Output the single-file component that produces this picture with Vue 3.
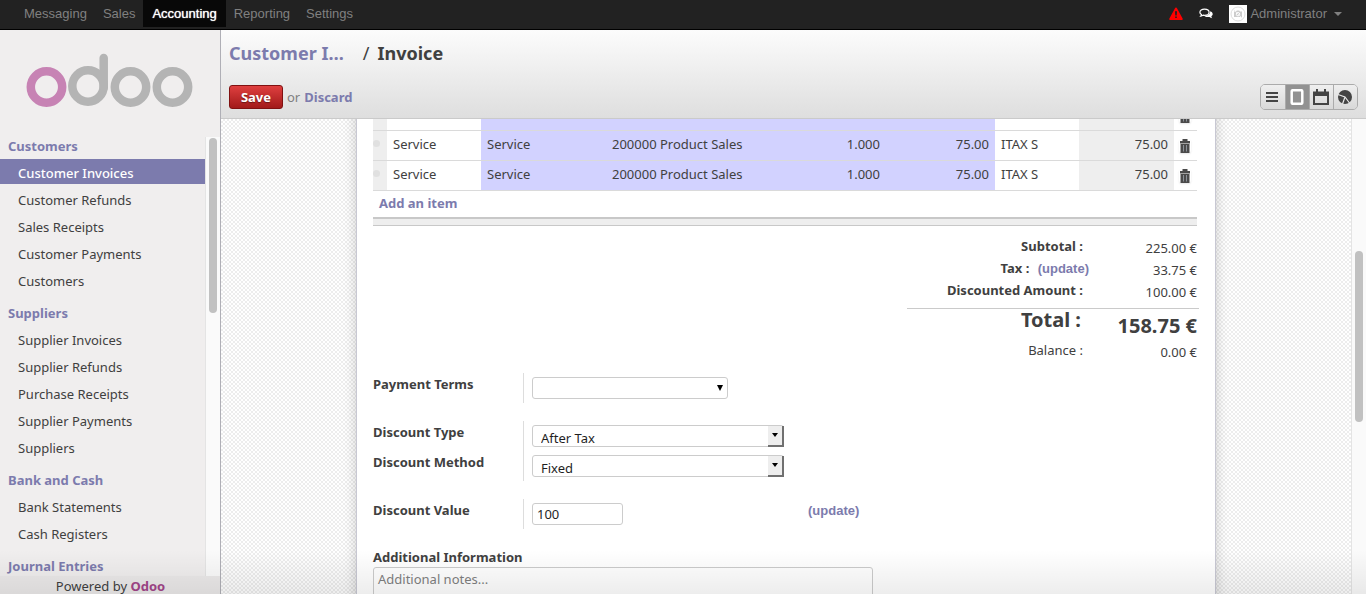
<script setup>
import { ref } from 'vue'

const apps = ['Messaging', 'Sales', 'Accounting', 'Reporting', 'Settings']
const activeApp = 'Accounting'

const sections = [
  {
    title: 'Customers',
    items: ['Customer Invoices', 'Customer Refunds', 'Sales Receipts', 'Customer Payments', 'Customers'],
  },
  {
    title: 'Suppliers',
    items: ['Supplier Invoices', 'Supplier Refunds', 'Purchase Receipts', 'Supplier Payments', 'Suppliers'],
  },
  { title: 'Bank and Cash', items: ['Bank Statements', 'Cash Registers'] },
  { title: 'Journal Entries', items: [] },
]
const activeItem = 'Customer Invoices'

const lines = [1, 2, 3].map((id) => ({
  id,
  product: 'Service',
  description: 'Service',
  account: '200000 Product Sales',
  quantity: '1.000',
  price: '75.00',
  tax: 'ITAX S',
  amount: '75.00',
}))

const paymentTerm = ref('')
const discountType = ref('After Tax')
const discountMethod = ref('Fixed')
const discountValue = ref('100')
const notes = ref('')
</script>

<template>
  <div class="client">
    <header class="topbar">
      <nav class="apps">
        <a v-for="app in apps" :key="app" href="#" :class="{ active: app === activeApp }">{{ app }}</a>
      </nav>
      <div class="systray">
        <button class="plain" type="button" aria-label="Warnings">
          <svg width="14" height="14" viewBox="0 0 14 14">
            <path d="M7 0.6c.5 0 .8.2 1 .6l5.6 10.2c.4.8 0 1.6-.9 1.6H1.300c-.9 0-1.300-.8-.9-1.600L6 1.200c.2-.4.5-.6 1-.6z" fill="#f00" />
            <path d="M6 4.200h2L7.700 8.500H6.300zM6.200 9.400h1.600v1.500H6.200z" fill="#222" />
          </svg>
        </button>
        <button class="plain" type="button" aria-label="Messages">
          <svg width="14" height="12" viewBox="0 0 14 12">
            <path d="M5.500 1.100c2.700 0 4.600 1.400 4.600 3.100S8.200 7.300 5.500 7.300c-.5 0-1 0-1.400-.2-.7.600-1.500.9-2.400 1 .4-.5.700-1 .8-1.600C1.500 6 .9 5.200.9 4.200c0-1.700 1.900-3.100 4.600-3.100z" fill="none" stroke="#fff" stroke-width="1.200" />
            <path d="M11.200 3.300c1.500.5 2.500 1.500 2.500 2.800 0 .9-.5 1.700-1.400 2.300.1.700.5 1.200 1 1.800-1.200-.1-2.100-.5-2.800-1.200-2 .3-4-.1-5.100-1.100 3.300.1 5.900-1.300 5.800-4.600z" fill="#fff" />
          </svg>
        </button>
        <button class="plain user" type="button">
          <svg class="avatar" width="18" height="18" viewBox="0 0 18 18">
            <rect width="18" height="18" fill="#fff" />
            <circle cx="9" cy="9" r="7" fill="none" stroke="#ddd" />
            <path d="M5 6.500h2l.8-1h2.400l.8 1h2v5.500H5z" fill="#ccc" />
            <circle cx="9" cy="9.200" r="1.700" fill="none" stroke="#fff" />
            <path d="M4 4l10 10" stroke="#eee" />
          </svg>
          <span>Administrator</span>
          <i class="caret"></i>
        </button>
      </div>
    </header>

    <div class="body">
      <aside class="sidebar">
        <a class="logo" href="#" aria-label="odoo">
          <svg width="168" height="56" viewBox="0 0 168 56" fill="none" stroke-width="8.500">
            <circle cx="20.500" cy="34" r="15.700" stroke="#c783b4" />
            <g stroke="#b4b4b4">
              <circle cx="62" cy="33" r="15.700" />
              <path d="M77.700 34.500V5" stroke-linecap="round" />
              <circle cx="104.500" cy="34" r="15.700" />
              <circle cx="146.500" cy="34" r="15.700" />
            </g>
          </svg>
        </a>
        <div class="menu-scroll">
          <nav class="menu">
            <section v-for="section in sections" :key="section.title">
              <h2>{{ section.title }}</h2>
              <ul>
                <li v-for="item in section.items" :key="item">
                  <a href="#" :class="{ active: item === activeItem }">{{ item }}</a>
                </li>
              </ul>
            </section>
          </nav>
          <div class="menu-track"><div class="thumb"></div></div>
        </div>
        <footer>Powered by <a href="#">Odoo</a></footer>
      </aside>

      <main>
        <div class="control-panel">
          <h1><a href="#">Customer I…</a><span class="slash">/</span><span>Invoice</span></h1>
          <div class="actions">
            <div class="edit">
              <button class="save" type="button">Save</button>
              <span class="or">or</span>
              <a href="#">Discard</a>
            </div>
            <div class="switcher">
              <button type="button" aria-label="List">
                <svg width="14" height="14" viewBox="0 0 14 14"><path d="M1 3h12M1 7h12M1 11h12" stroke="#444" stroke-width="2" /></svg>
              </button>
              <button class="on" type="button" aria-label="Form">
                <svg width="14" height="16" viewBox="0 0 14 16"><rect x="1.700" y="1.200" width="10.600" height="13.600" rx="1" fill="none" stroke="#fff" stroke-width="2.500" /></svg>
              </button>
              <button type="button" aria-label="Calendar">
                <svg width="16" height="16" viewBox="0 0 16 16"><path d="M0 2.500h16V16H0zM2 7v7h12V7z" fill="#444" fill-rule="evenodd" /><path d="M4 0v4M12 0v4" stroke="#444" stroke-width="2" /></svg>
              </button>
              <button type="button" aria-label="Graph">
                <svg width="16" height="16" viewBox="0 0 16 16"><circle cx="8" cy="8" r="7" fill="#444" /><path d="M1 5.500L8 8l4.500 6M8 8l-2.500 7" stroke="#e8e8e8" stroke-width="1.200" fill="none" /></svg>
              </button>
            </div>
          </div>
        </div>

        <div class="view">
          <div class="canvas">
            <div class="sheet">
              <table class="lines">
                <colgroup>
                  <col class="c-handle" /><col class="c-product" /><col class="c-desc" /><col />
                  <col class="c-qty" /><col class="c-price" /><col class="c-tax" /><col class="c-amount" /><col class="c-del" />
                </colgroup>
                <tbody>
                  <tr v-for="line in lines" :key="line.id">
                    <td class="handle"><i></i></td>
                    <td>{{ line.product }}</td>
                    <td class="req">{{ line.description }}</td>
                    <td class="req">{{ line.account }}</td>
                    <td class="req num">{{ line.quantity }}</td>
                    <td class="req num">{{ line.price }}</td>
                    <td>{{ line.tax }}</td>
                    <td class="ro num">{{ line.amount }}</td>
                    <td class="del">
                      <button class="plain" type="button" aria-label="Delete line">
                        <svg width="12" height="14" viewBox="0 0 12 14">
                          <path d="M1 2h2.500V0h5v2H11v2.500H1z" fill="#4a4a4a" />
                          <path d="M1.500 5h9v9h-9z" fill="#4a4a4a" />
                          <path d="M4.500 6v6.500M7.500 6v6.500" stroke="#8d9299" />
                        </svg>
                      </button>
                    </td>
                  </tr>
                </tbody>
              </table>
              <div class="add"><a href="#">Add an item</a></div>
              <div class="table-foot"></div>

              <dl class="totals">
                <div><dt>Subtotal :</dt><dd>225.00 €</dd></div>
                <div class="tax"><dt>Tax : <a class="update" href="#">(update)</a></dt><dd>33.75 €</dd></div>
                <div><dt>Discounted Amount :</dt><dd>100.00 €</dd></div>
                <div class="total"><dt>Total :</dt><dd>158.75 €</dd></div>
                <div class="balance"><dt>Balance :</dt><dd>0.00 €</dd></div>
              </dl>

              <form @submit.prevent>
                <div class="group">
                  <label for="terms">Payment Terms</label>
                  <div class="field">
                    <div class="combo">
                      <input id="terms" v-model="paymentTerm" type="text" />
                      <button type="button" class="plain" aria-label="Open payment terms"><i></i></button>
                    </div>
                  </div>
                </div>
                <div class="group">
                  <label for="dtype">Discount Type</label>
                  <div class="field">
                    <div class="select">
                      <select id="dtype" v-model="discountType">
                        <option>After Tax</option>
                        <option>Before Tax</option>
                      </select>
                      <span class="drop"><i></i></span>
                    </div>
                  </div>
                  <label for="dmethod">Discount Method</label>
                  <div class="field">
                    <div class="select">
                      <select id="dmethod" v-model="discountMethod">
                        <option>Fixed</option>
                        <option>Percentage</option>
                      </select>
                      <span class="drop"><i></i></span>
                    </div>
                  </div>
                </div>
                <div class="group">
                  <label for="dvalue">Discount Value</label>
                  <div class="field value">
                    <input id="dvalue" v-model="discountValue" type="text" />
                    <a class="update" href="#">(update)</a>
                  </div>
                </div>
                <label class="notes-label" for="notes">Additional Information</label>
                <textarea id="notes" v-model="notes" placeholder="Additional notes..."></textarea>
              </form>
            </div>
          </div>
          <div class="view-track"><div class="thumb"></div></div>
        </div>
      </main>
    </div>
  </div>
</template>

<style>
body {
  background: #fff;
  overflow: hidden;
}
</style>

<style scoped>
* {
  box-sizing: border-box;
}
.client {
  display: flex;
  flex-direction: column;
  height: 100vh;
  overflow: hidden;
  position: relative;
  font: 13px/20px "Noto Sans", "Open Sans", sans-serif;
  color: #404040;
}
.client::after {
  content: "";
  position: absolute;
  left: 0;
  right: 0;
  bottom: 0;
  height: 44px;
  background: linear-gradient(rgba(0, 0, 0, 0), rgba(0, 0, 0, 0.07));
  pointer-events: none;
}
a {
  color: #7c7bad;
  font-weight: bold;
  text-decoration: none;
}
button,
input,
select,
textarea {
  font: inherit;
  color: inherit;
}
.plain {
  display: flex;
  align-items: center;
  border: 0;
  padding: 0;
  background: none;
}

.topbar {
  display: flex;
  justify-content: space-between;
  flex: none;
  height: 30px;
  padding: 0 24px 0 16px;
  background: #222;
  border-bottom: 1px solid #000;
  font: 13px/27px "Liberation Sans", Arial, sans-serif;
}
.apps {
  display: flex;
}
.apps a {
  height: 27px;
  padding: 0 8px;
  color: #808080;
  font-weight: normal;
}
.apps a.active {
  padding: 0 9px;
  background: #080808;
  color: #fff;
  text-shadow: 0 0 1px #fff;
}
.systray {
  display: flex;
  align-items: center;
  gap: 16px;
  padding-bottom: 1px;
  color: #808080;
}
.user {
  gap: 3px;
}
.user span {
  padding-bottom: 1px;
}
.caret {
  margin-left: 4px;
  border: 4px solid transparent;
  border-top-color: #808080;
  border-bottom: 0;
}

.body {
  display: flex;
  flex: 1;
  min-height: 0;
}
.sidebar {
  display: flex;
  flex-direction: column;
  flex: none;
  width: 221px;
  background: #f0eeee;
  border-right: 1px solid #afafb6;
}
.logo {
  flex: none;
  height: 107px;
  padding: 23px 26px 0;
}
.logo svg {
  display: block;
}
.menu-scroll {
  display: flex;
  flex: 1;
  min-height: 0;
}
.menu {
  flex: 1;
  overflow: hidden;
}
.menu section {
  margin-bottom: 10px;
}
.menu h2 {
  margin: 0;
  padding: 0 8px;
  height: 22px;
  font-size: 13px;
  line-height: 18px;
  color: #7c7bad;
}
.menu ul {
  margin: 0;
  padding: 0;
  list-style: none;
}
.menu li {
  padding-bottom: 2px;
}
.menu li a {
  display: block;
  padding: 3px 18px 0;
  line-height: 22px;
  color: #404040;
  font-weight: normal;
}
.menu li a.active {
  background: #7c7bad;
  color: #fff;
  font-weight: 500;
}
.menu-track,
.view-track {
  flex: none;
  width: 15px;
  padding: 1px 3px;
  border-left: 1px solid #e4e4e4;
  background: #fafafa;
}
.thumb {
  width: 8px;
  border-radius: 4px;
  background: #c1c1c1;
}
.menu-track .thumb {
  height: 40%;
}
.sidebar footer {
  flex: none;
  height: 18px;
  padding-left: 1px;
  text-align: center;
  background: #ebe9e9;
}
.sidebar footer a {
  color: #a24689;
}

main {
  display: flex;
  flex-direction: column;
  flex: 1;
  min-width: 0;
}
.control-panel {
  flex: none;
  height: 89px;
  padding: 10px 8px 0;
  background: linear-gradient(#fcfcfc, #dedede);
  border-bottom: 1px solid #cacaca;
}
h1 {
  display: flex;
  margin: 0;
  font-size: 18px;
  line-height: 26px;
}
.slash {
  padding: 0 8px 0 19px;
  font-weight: normal;
}
.actions {
  display: flex;
  justify-content: space-between;
  align-items: center;
  margin-top: 18px;
}
.edit {
  display: flex;
  align-items: center;
  gap: 4px;
}
.save {
  width: 54px;
  height: 24px;
  padding: 0;
  border: 1px solid #801111;
  border-radius: 3px;
  background: linear-gradient(#df3f3f, #a21a1a);
  color: #fff;
  font-weight: bold;
  line-height: 20px;
  text-shadow: 0 1px 1px rgba(0, 0, 0, 0.4);
}
.or {
  color: #808080;
}
.switcher {
  display: flex;
  border: 1px solid #ababab;
  border-radius: 5px;
  overflow: hidden;
}
.switcher button {
  display: flex;
  align-items: center;
  justify-content: center;
  width: 24px;
  height: 24px;
  padding: 0 2px 0 0;
  border: 0;
  background: linear-gradient(#efefef, #d8d8d8);
}
.switcher button + button {
  border-left: 1px solid #ababab;
}
.switcher button.on {
  background: #929292;
}

.view {
  display: flex;
  flex: 1;
  min-height: 0;
}
.canvas {
  flex: 1;
  overflow: hidden;
  background: repeating-conic-gradient(#ededed 0 25%, #fff 0 50%) 0 0 / 4px 4px;
}
.view-track {
  padding: 132px 3px 0;
}
.view-track .thumb {
  height: 171px;
}
.sheet {
  max-width: 860px;
  min-height: 100%;
  margin: 0 auto;
  padding: 0 18px 0 16px;
  background: #fff;
  border: 1px solid #c8c8d3;
  border-width: 0 1px;
  box-shadow: 0 0 12px rgba(0, 0, 0, 0.2);
}
.lines {
  width: 100%;
  margin-top: -19px;
  table-layout: fixed;
  border-collapse: collapse;
}
.c-handle { width: 14px; }
.c-product { width: 94px; }
.c-desc { width: 125px; }
.c-qty { width: 100px; }
.c-price { width: 109px; }
.c-tax { width: 84px; }
.c-amount { width: 95px; }
.c-del { width: 23px; }
.lines tr {
  height: 30px;
  border-bottom: 1px solid #dadada;
}
.lines td {
  padding: 0 6px 2px;
}
.lines .req {
  background: #d2d2ff;
}
.lines .ro {
  background: #eee;
}
.lines .num {
  text-align: right;
}
.lines .handle {
  padding: 0 0 4px;
  background: #eee;
}
.handle i {
  display: block;
  width: 7px;
  height: 7px;
  border-radius: 50%;
  background: #e0e0e0;
}
.lines .del {
  padding: 2px 5px 0;
}
.del button {
  border-radius: 3px;
  box-shadow: 0 1px 2px rgba(0, 0, 0, 0.1);
}
.add {
  padding: 2px 6px 4px;
}
.table-foot {
  height: 9px;
  border-top: 2px solid #c8c8c8;
  border-bottom: 1px solid #c8c8c8;
  background: #eee;
}

.totals {
  width: 292px;
  margin: 10px -2px 0 auto;
}
.totals div {
  display: flex;
  height: 22px;
}
.totals dt {
  flex: none;
  width: 176px;
  font-weight: bold;
  text-align: right;
}
.totals dd {
  flex: 1;
  margin: 0;
  padding: 2px 2px 0 0;
  text-align: right;
}
.totals .tax dt {
  width: 182px;
}
.tax .update {
  margin-left: 5px;
}
.totals .total {
  height: 32px;
  margin-top: 6px;
  border-top: 1px solid #cacaca;
  font-size: 20px;
  line-height: 22px;
}
.total dt {
  padding-right: 2px;
}
.totals .total dd {
  padding-top: 6px;
  font-weight: bold;
}
.totals .balance dt {
  font-weight: normal;
}
.update {
  font-family: "Liberation Sans", Arial, sans-serif;
}

form {
  margin-top: 11px;
}
.group {
  display: grid;
  grid-template-columns: 150px 1fr;
  grid-auto-rows: 30px;
  margin-bottom: 18px;
}
label {
  font-weight: bold;
  padding-top: 1px;
}
.field {
  display: flex;
  align-items: center;
  padding-left: 8px;
  border-left: 1px solid #ddd;
}
.field input,
.field select,
textarea {
  height: 22px;
  padding: 0 4px;
  border: 1px solid #ccc;
  border-radius: 3px;
  background: #fff;
  color: #1f1f1f;
  outline: 0;
}
.combo {
  position: relative;
  width: 196px;
}
.combo,
.select {
  display: flex;
}
.combo input,
.select select {
  width: 100%;
}
.combo button {
  position: absolute;
  right: 5px;
  top: 8px;
}
.combo i {
  border: 3px solid transparent;
  border-top: 6px solid #000;
  border-bottom: 0;
}
.select {
  position: relative;
  width: 252px;
}
.field select {
  appearance: none;
  padding: 2px 8px 0;
}
.drop {
  position: absolute;
  top: 1px;
  right: 0;
  bottom: 0;
  display: flex;
  align-items: center;
  justify-content: center;
  width: 16px;
  border: solid #707070;
  border-width: 0 2px 2px 0;
  background: #eee;
  pointer-events: none;
}
.drop i {
  border: 3px solid transparent;
  border-top: 4px solid #000;
  border-bottom: 0;
}
.value input {
  width: 91px;
}
.value .update {
  margin-left: 185px;
  padding-bottom: 6px;
}
.notes-label {
  display: block;
  height: 20px;
  padding: 0;
}
textarea {
  display: block;
  width: 500px;
  max-width: 100%;
  height: 64px;
  padding-top: 1px;
  resize: none;
}
textarea::placeholder {
  color: #808080;
}
</style>
